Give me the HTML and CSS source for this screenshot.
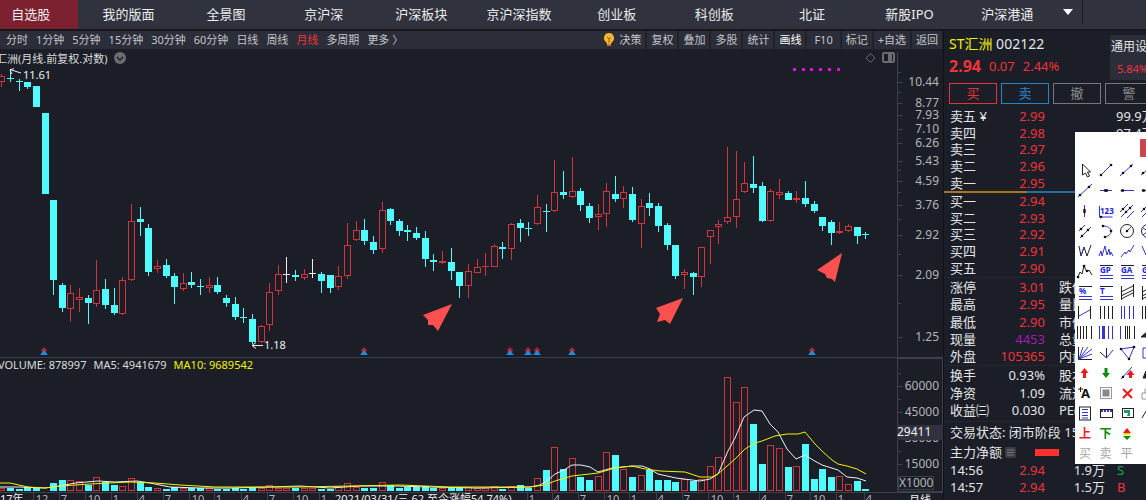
FILE: index.html
```html
<!DOCTYPE html>
<html lang="zh-CN">
<head>
    <meta charset="UTF-8">
    <title>ST汇洲 002122</title>
    <meta name="viewport" content="width=device-width">
    <link rel="stylesheet" href="styles.css">
</head>
<body>
<!--板块导航-->
<nav class="top-nav">
    <div class="tabs">
        <a href="#zixuan" class="on">自选股</a>
        <a href="#mine">我的版面</a>
        <a href="#all">全景图</a>
        <a href="#jhs">京沪深</a>
        <a href="#block">沪深板块</a>
        <a href="#index">京沪深指数</a>
        <a href="#cyb">创业板</a>
        <a href="#kcb">科创板</a>
        <a href="#bz">北证</a>
        <a href="#ipo">新股IPO</a>
        <a href="#hsgt">沪深港通</a>
    </div>
    <button class="more" aria-label="更多板块"><svg width="10" height="6" viewBox="0 0 10 6"><path d="M0 0h10L5 6z" fill="#fff"/></svg></button>
</nav>

<main class="main">
    <section class="left">
        <div class="toolbar">
            <div class="periods">
                <button>分时</button>
                <button>1分钟</button>
                <button>5分钟</button>
                <button>15分钟</button>
                <button>30分钟</button>
                <button>60分钟</button>
                <button>日线</button>
                <button>周线</button>
                <button class="on">月线</button>
                <button>多周期</button>
                <button>更多 〉</button>
            </div>
            <div class="tools">
                <button class="idea">
                    <svg width="12" height="14" viewBox="0 0 12 14">
                        <path d="M6 0a5 5 0 0 1 3 9l-1 2H4L3 9a5 5 0 0 1 3-9z" fill="#f5b82e"/>
                        <path d="M4 4l2 2 2-2M6 6v4" fill="none" stroke="#9a5a10"/>
                        <path d="M4 11h4v2H4z" fill="#b97a1c"/>
                    </svg>决策</button>
                <button>复权</button>
                <button>叠加</button>
                <button>多股</button>
                <button>统计</button>
                <button class="lit">画线</button>
                <button class="f10">F10</button>
                <button>标记</button>
                <button>+自选</button>
                <button>返回</button>
            </div>
        </div>

        <!--K线-->
        <div class="pane price-pane">
            <div class="plot">
                <div class="plot-head">
                    <span class="name">汇洲(月线.前复权.对数)</span>
                    <svg class="badge" width="12" height="12" viewBox="0 0 12 12"><circle cx="6" cy="6" r="6" fill="#6b6b70"/><path d="M3 5l3 3 3-3" fill="none" stroke="#1b1e26" stroke-width="1.4"/></svg>
                    <svg class="corner" width="30" height="12" viewBox="0 0 30 12" fill="none" stroke="#6b6b70">
                        <path d="M5.500 1.500l4.500 4.500-4.500 4.500L1 6z"/>
                        <rect x="18" y="1" width="11" height="9" rx="1" stroke-width="2"/>
                        <path d="M25 2v8" stroke-width="4"/>
                    </svg>
                </div>
                <svg id="kline" class="kline" viewBox="0 66 897 291" preserveAspectRatio="xMaxYMin meet"></svg>
            </div>
            <svg id="priceAxis" class="axis" viewBox="897 49 46 308"></svg>
        </div>

        <!--成交量-->
        <div class="pane vol-pane">
            <div class="plot">
                <div class="vol-head">
                    <span>VOLUME: 878997</span>
                    <span>MA5: 4941679</span>
                    <span class="ma10">MA10: 9689542</span>
                </div>
                <svg id="volume" class="volume" viewBox="0 372 897 120" preserveAspectRatio="xMaxYMin meet"></svg>
            </div>
            <svg id="volAxis" class="axis" viewBox="897 358 46 134"></svg>
        </div>
        <svg id="dates" class="dates" viewBox="0 492 943 20" preserveAspectRatio="xMaxYMin meet"></svg>
    </section>

    <aside class="quote">
        <header class="quote-head">
            <div>
                <h1><b>ST汇洲</b> 002122</h1>
                <p class="now"><strong>2.94</strong><span>0.07</span><span>2.44%</span></p>
            </div>
            <a href="#industry" class="industry"><span>通用设备</span><em>5.84%</em></a>
        </header>
        <div class="orders">
            <button class="buy">买</button>
            <button class="sell">卖</button>
            <button>撤</button>
            <button>警</button>
        </div>
        <table class="book">
            <tr><th>卖五 ¥</th><td>2.99</td><td class="vol">99.9万</td></tr>
            <tr><th>卖四</th><td>2.98</td><td class="vol">97.4万</td></tr>
            <tr><th>卖三</th><td>2.97</td><td class="vol"></td></tr>
            <tr><th>卖二</th><td>2.96</td><td class="vol"></td></tr>
            <tr><th>卖一</th><td>2.95</td><td class="vol"></td></tr>
        </table>
        <div class="ratio"><i></i></div>
        <table class="book">
            <tr><th>买一</th><td>2.94</td><td class="vol"></td></tr>
            <tr><th>买二</th><td>2.93</td><td class="vol"></td></tr>
            <tr><th>买三</th><td>2.92</td><td class="vol"></td></tr>
            <tr><th>买四</th><td>2.91</td><td class="vol"></td></tr>
            <tr><th>买五</th><td>2.90</td><td class="vol"></td></tr>
        </table>
        <table class="facts five">
            <tr><th>涨停</th><td>3.01</td><th class="second">跌停</th></tr>
            <tr><th>最高</th><td>2.95</td><th class="second">量比</th></tr>
            <tr><th>最低</th><td>2.90</td><th class="second">市值</th></tr>
            <tr><th>现量</th><td class="purple">4453</td><th class="second">总量</th></tr>
            <tr><th>外盘</th><td>105365</td><th class="second">内盘</th></tr>
        </table>
        <table class="facts three">
            <tr><th>换手</th><td class="plain">0.93%</td><th class="second">股本</th></tr>
            <tr><th>净资</th><td class="plain">1.09</td><th class="second">流通</th></tr>
            <tr><th>收益㈢</th><td class="plain">0.030</td><th class="second">PE(动)</th></tr>
        </table>
        <p class="status">交易状态: 闭市阶段 15:00</p>
        <p class="flow">主力净额
            <svg width="11" height="11" viewBox="0 0 11 11"><rect width="11" height="11" rx="2" fill="#3a3c42"/><path d="M2 3h7M2 5.500h7M2 8h7" stroke="#77797e"/></svg>
            <i></i>
        </p>
        <table class="ticks">
            <tr><th>14:56</th><td>2.94</td><td class="hand">1.9万</td><td class="s">S</td></tr>
            <tr><th>14:57</th><td>2.94</td><td class="hand">1.5万</td><td class="b">B</td></tr>
        </table>
    </aside>
</main>

<!--画线工具浮窗-->
<div class="palette">
    <button class="close" aria-label="关闭"></button>
    <div id="drawTools" class="draw-tools"></div>
</div>
<script src="chart.js"></script>
</body>
</html>
```

FILE: styles.css
```css
html, body{
    height: 100%;
    margin: 0;
    padding: 0;
}

body{
    position: relative;
    overflow: hidden;
    background: #1b1e26;
    color: #dcdcde;
    font-family: "Noto Sans", "Noto Sans CJK SC", sans-serif;
    font-size: 13px;
}

a{
    color: inherit;
    text-decoration: none;
}

button{
    margin: 0;
    padding: 0;
    border: 0;
    background: none;
    color: inherit;
    font: inherit;
}

h1, p{
    margin: 0;
    font-weight: normal;
}

svg{
    display: block;
}

svg text{
    font-family: "Noto Sans", "Noto Sans CJK SC", sans-serif;
    font-size: 11px;
}

/* 顶部导航 */
.top-nav{
    display: flex;
    height: 29px;
    padding-right: 63px;
    background: #30333d;
    border-bottom: 2px solid #15171d;
}

.tabs{
    flex: 1;
    display: grid;
    grid-template-columns: repeat(11, 1fr);
    gap: 4px;
    margin-left: -16px;
    line-height: 28px;
    text-align: center;
    color: #ececee;
}

.tabs a{
    white-space: nowrap;
}

.tabs .on{
    background: #7d2130;
}

.more{
    display: flex;
    align-items: center;
    justify-content: center;
    width: 29px;
    height: 24px;
    border-right: 1px solid #15171d;
}

.main{
    display: grid;
    grid-template-columns: minmax(0, 1fr) 203px;
}

/* 周期和工具 */
.toolbar{
    display: flex;
    justify-content: space-between;
    height: 18px;
    margin-right: 1px;
    background: #2b2d38;
    color: #c4c4c8;
    font-size: 11px;
    line-height: 18px;
    white-space: nowrap;
}

.periods{
    display: flex;
    gap: 8px;
    padding-left: 6px;
}

.periods .on{
    color: #f0333b;
}

.tools{
    display: flex;
    gap: 2px;
    background: #20222b;
}

.tools button{
    padding: 0 4px;
    background: #2b2d38;
}

.tools .idea{
    display: flex;
    align-items: center;
    gap: 4px;
}

.tools .lit{
    color: #fff;
}

.tools .f10{
    padding: 0 7px;
}

/* 图表 */
.pane{
    display: grid;
    grid-template-columns: minmax(0, 1fr) 46px;
}

.price-pane{
    border-bottom: 1px solid #3c4049;
}

.plot-head{
    display: flex;
    align-items: center;
    height: 17px;
    font-size: 11px;
    white-space: nowrap;
}

.plot-head .name{
    margin-left: -4px;
}

.plot-head .badge{
    margin-left: 6px;
}

.plot-head .corner{
    margin-left: auto;
    margin-right: 2px;
}

.kline, .volume, .dates{
    width: 100%;
    overflow: visible;
}

.kline{
    height: 291px;
}

.vol-head{
    display: flex;
    gap: 7px;
    height: 14px;
    margin-left: -2px;
    font-size: 11px;
    line-height: 14px;
    white-space: nowrap;
}

.ma10{
    color: #f2f200;
}

.volume{
    height: 120px;
}

.dates{
    height: 20px;
}

.axis{
    width: 46px;
}

.up{
    fill: #1b1e26;
    stroke: #d2343c;
}

.down{
    fill: #4ffcff;
    stroke: #4ffcff;
}

.flat{
    fill: #eee;
    stroke: #eee;
}

.grid-line{
    fill: none;
    stroke: #3c4049;
}

.label{
    fill: #b4b5b9;
}

.light{
    fill: #f0f0f0;
}

#priceAxis .label, #volAxis text{
    font-size: 12px;
}

/* 行情 */
.quote{
    border-left: 1px solid #101218;
    box-sizing: border-box;
    overflow: hidden;
    color: #e4e4e6;
}

.quote-head{
    display: flex;
    justify-content: space-between;
    height: 52px;
    padding: 4px 0 0 5px;
    box-sizing: border-box;
    white-space: nowrap;
}

.quote-head h1{
    font-size: 14px;
    line-height: 18px;
}

.quote-head b{
    color: #f2f200;
    font-weight: normal;
}

.now{
    display: flex;
    align-items: center;
    gap: 8px;
    height: 26px;
    color: #f0333b;
}

.now strong{
    font-size: 16px;
}

.industry{
    width: 36px;
    height: 45px;
    background: #2b2d38;
    overflow: hidden;
}

.industry span{
    display: block;
    padding-left: 1px;
    font-size: 12px;
    line-height: 24px;
}

.industry em{
    display: block;
    padding-left: 7px;
    color: #f0333b;
    font-size: 11px;
    font-style: normal;
    line-height: 20px;
}

.orders{
    display: flex;
    gap: 4px;
    padding-left: 5px;
}

.orders button{
    flex: none;
    width: 48px;
    height: 21px;
    border: 1px solid #75777c;
    color: #8b8d92;
    line-height: 19px;
}

.orders .buy{
    border-color: #e0333b;
    color: #e0333b;
}

.orders .sell{
    border-color: #2a83c8;
    color: #2a83c8;
}

table{
    width: 100%;
    border-collapse: collapse;
    table-layout: fixed;
}

th, td{
    padding: 0;
    font-weight: normal;
    line-height: 16px;
    text-align: left;
    white-space: nowrap;
}

.book, .facts, .ticks{
    color: #f0333b;
}

.quote th{
    width: 48px;
    padding-left: 6px;
    color: #e4e4e6;
    box-sizing: border-box;
}

.book td, .facts td, .ticks td{
    width: 53px;
    text-align: right;
}

.book{
    height: 83px;
    margin-top: 4px;
}

.ratio + .book{
    margin-top: 0;
}

.book .vol{
    width: auto;
    padding-left: 71px;
    color: #e4e4e6;
    text-align: left;
}

.ratio{
    height: 2px;
    background: #1f6ea8;
}

.ratio i{
    display: block;
    width: 41%;
    height: 2px;
    background: #a9761a;
}

.facts{
    border-top: 1px solid #24272f;
}

.quote .second{
    width: auto;
    padding-left: 14px;
}

.five{
    height: 88px;
    margin-top: 1px;
}

.three{
    height: 54px;
}

.facts .purple{
    color: #a21caf;
}

.facts .plain{
    color: #e4e4e6;
}

.status, .flow{
    padding-left: 6px;
    line-height: 20px;
    white-space: nowrap;
}

.status{
    margin-top: 2px;
    border-top: 1px solid #24272f;
}

.flow{
    display: flex;
    align-items: center;
    gap: 3px;
    height: 20px;
}

.flow i{
    width: 24px;
    height: 7px;
    margin-left: 16px;
    background: #ff3030;
}

.ticks{
    height: 33px;
}

.ticks .hand{
    width: 60px;
    color: #e4e4e6;
}

.ticks .s, .ticks .b{
    width: auto;
    padding-left: 12px;
    text-align: left;
}

.ticks .s{
    color: #18a850;
}

/* 画线浮窗 */
.palette{
    position: absolute;
    top: 132px;
    right: -13px;
    width: 84px;
    height: 332px;
    background: #fff;
    overflow: hidden;
}

.close{
    display: block;
    width: 19px;
    height: 18px;
    margin: 7px 0 3px 65px;
    background: #c9484f;
}

.draw-tools{
    display: grid;
    grid-template-columns: 20px 21px 21px 21px;
    grid-template-rows: repeat(15, 1fr);
    height: 304px;
}

.draw-tools button{
    display: flex;
    align-items: center;
    justify-content: center;
    color: #a4a4a4;
    font-size: 12px;
    line-height: 16px;
}

.draw-tools svg{
    overflow: visible;
    fill: none;
    stroke: #3434d4;
}

.draw-tools svg text{
    fill: #2222dd;
    stroke: none;
    font-size: 8px;
    font-weight: bold;
}

.draw-tools svg .letter{
    fill: #111;
    font-size: 13px;
}

.draw-tools .k{
    stroke: #222;
}

.draw-tools .dot{
    fill: #111;
    stroke: none;
}

.draw-tools .red, .draw-tools .green{
    font-weight: bold;
}

.draw-tools .red{
    color: #f01818;
}

.draw-tools .green{
    color: #0a8a0a;
}
```

FILE: chart.js
```js
// 每根K线: 类型(r涨 c跌 w平), 最高, 实体上, 实体下, 最低, 成交量柱顶
var bars = [
    ['r',74,76,82,87,488], ['c',70,78,79,82,488], ['c',79,81,82,91,489], ['c',82,82,87,89,487],
    ['c',86,86,107,107,488], ['c',113,113,194,194,491], ['c',200,200,280,295,483], ['c',283,285,308,312,480],
    ['r',285,293,309,322,480], ['r',288,297,300,312,481], ['c',295,298,303,324,485], ['r',260,290,304,307,477],
    ['c',279,289,305,309,482], ['c',288,305,313,315,485], ['r',277,280,314,315,486], ['r',204,221,280,281,478],
    ['c',207,219,222,236,482], ['c',224,228,272,276,487], ['r',260,266,269,273,488], ['c',259,265,276,278,489],
    ['c',273,276,287,304,487], ['r',273,283,289,291,488], ['c',272,282,285,288,488], ['c',279,286,287,295,488],
    ['r',277,285,288,293,488], ['c',277,285,292,294,489], ['c',295,298,303,307,489], ['c',297,304,317,320,488],
    ['c',308,317,318,323,489], ['c',314,319,342,344,488], ['r',325,326,342,343,488], ['r',283,292,325,331,485],
    ['r',265,274,291,295,488], ['w',257,274,275,283,488], ['c',270,275,277,281,488], ['r',269,274,278,280,488],
    ['w',259,273,274,278,488], ['c',272,274,281,293,489], ['c',275,275,288,293,489], ['r',266,276,287,290,486],
    ['r',223,245,276,279,483], ['r',221,230,240,241,487], ['c',219,230,241,245,488], ['c',236,242,250,254,488],
    ['r',202,210,249,253,482], ['c',208,209,221,225,485], ['c',219,221,231,236,488], ['c',225,230,232,241,487],
    ['c',227,233,238,240,487], ['c',231,238,259,267,486], ['c',254,260,262,271,488], ['r',251,261,263,264,488],
    ['c',248,262,271,280,488], ['c',272,272,286,298,487], ['r',264,271,286,298,487], ['r',259,267,273,273,488],
    ['r',253,266,267,276,488], ['r',244,246,267,267,486], ['c',242,247,249,259,489], ['r',223,224,249,260,486],
    ['c',219,223,228,242,485], ['c',222,228,229,236,488], ['r',195,207,224,225,478], ['c',204,211,212,232,470],
    ['r',160,192,211,212,447], ['c',171,192,195,199,469], ['r',157,191,197,198,458], ['c',188,191,205,211,477],
    ['c',203,206,218,223,480], ['r',204,214,217,230,476], ['r',183,191,214,227,452], ['c',176,194,199,202,455],
    ['r',186,192,199,208,469], ['c',187,194,220,222,477], ['r',199,206,224,248,475], ['c',193,203,208,216,470],
    ['c',203,206,226,232,480], ['c',223,225,245,250,480], ['c',245,245,276,279,482], ['r',269,272,275,289,479],
    ['c',272,273,277,295,481], ['r',247,247,277,287,479], ['r',230,230,237,264,466], ['r',220,224,227,244,457],
    ['r',147,217,222,224,377], ['r',151,199,217,228,402], ['r',162,183,192,193,387], ['c',156,184,188,193,424],
    ['c',182,186,221,222,464], ['r',189,191,221,222,445], ['r',179,192,195,199,448], ['c',191,193,200,200,467],
    ['r',191,198,200,203,466], ['c',181,198,204,207,444], ['c',201,204,211,213,479], ['c',217,217,226,231,469],
    ['c',220,222,233,245,477], ['r',222,231,233,234,476], ['r',224,226,231,232,484], ['c',227,227,236,244,481],
    ['c',232,234,235,239,489]
];
var cls = {r: 'up', c: 'down', w: 'flat'};

function $(id){
    return document.getElementById(id);
}

function barX(i){
    return Math.round(10 + (i - 1) * 8.64) + 0.5;
}

function rect(c, x, y, w, h){
    return '<rect class="' + c + '" x="' + x + '" y="' + y + '" width="' + w + '" height="' + h + '"/>';
}

function line(c, x1, y1, x2, y2){
    return '<path class="' + c + '" d="M' + x1 + ' ' + y1 + 'L' + x2 + ' ' + y2 + '"/>';
}

function text(c, x, y, s, anchor){
    return '<text class="' + c + '" x="' + x + '" y="' + y + '" text-anchor="' + (anchor || 'start') + '">' + s + '</text>';
}

// K线
var k = '', v = '';
bars.forEach(function(b, i){
    var x = barX(i), c = cls[b[0]];
    k += line(c, x, b[1], x, b[4]);
    if (b[3] - b[2] < 2){
        k += line(c, x - 3.5, b[2] + 0.5, x + 3.5, b[2] + 0.5);
    }else{
        k += rect(c, x - 3, b[2] + 0.5, 6, b[3] - b[2] - 1);
    }
    if (b[5] < 491){
        v += rect(c === 'flat' ? 'up' : c, x - 3, b[5] + 0.5, 6, 490 - b[5]);
    }
});

// 除权标记
[44, 364, 510, 528, 537, 572, 812].forEach(function(x){
    k += '<path fill="#b3202b" d="M' + x + ' 347l3 3-1 2h-4l-1-2z"/>';
    k += '<path fill="#1f8ae0" d="M' + x + ' 350l4 5h-8z"/>';
});
for (var i = 0; i < 6; i++){
    k += '<rect fill="#e010e0" x="' + (793 + Math.round(i * 8.7)) + '" y="68" width="3" height="3"/>';
}

// 手绘箭头
['452,304 423,315 428,320 428,325 433,325 438,331',
 '683,298 656,308 660,314 657,322 665,320 670,324',
 '842,253 817,270 825,274 827,278 832,279 835,282'].forEach(function(p){
    k += '<polygon fill="#ff5050" points="' + p + '"/>';
});

k += '<path fill="none" stroke="#eee" d="M21 73L10 69.500m4-1l-4 1.500 2 4M263 345.500h-11m4-3l-4 3 4 3"/>';
k += text('light', 23, 79, '11.61') + text('light', 264, 349, '1.18');
$('kline').innerHTML = k;

// 均线
v += '<polyline fill="none" stroke="#f0f0f0" points="0,487 20,487 45,488 60,486 75,483 98,481 115,482 137,481 150,483 170,487 200,488 230,488 270,487 300,486 330,488 360,486 395,486 430,487 476,488 530,487 540,485 547,481 555,474 564,470 572,465 581,465 590,467 598,472 612,468 633,466 642,466 650,469 658,474 676,478 700,481 710,479 718,474 728,451 735,438 744,417 754,410 762,411 770,424 778,432 787,449 796,459 805,455 813,460 822,465 838,470 847,477 857,478 866,481"/>';
v += '<polyline fill="none" stroke="#f2f200" points="0,483 10,483 28,487 45,488 60,486 90,484 130,482 155,483 180,485 215,487 300,487 400,485 450,487 530,487 545,485 555,481 572,476 598,473 615,468 632,466 645,469 660,471 685,472 700,477 712,477 718,474 735,459 745,449 755,443 762,441 775,436 787,434 798,434 805,432 815,444 822,451 832,460 838,464 847,466 857,469 866,474"/>';
$('volume').innerHTML = v;

// 价格轴(对数)
var a = line('grid-line', 897.5, 52, 897.5, 357);
[['10.44',82],['8.77',103],['7.93',115],['7.10',129],['6.26',143],['5.43',161],['4.59',181],
 ['3.76',205],['2.92',235],['2.09',275],['1.25',337]].forEach(function(p){
    a += line('grid-line', 898, p[1] + 0.5, 903, p[1] + 0.5);
    a += text('label', 939, p[1] + 4, p[0], 'end');
});
[72, 92, 170, 192, 219, 254, 303].forEach(function(y){
    a += line('grid-line', 898, y + 0.5, 901, y + 0.5);
});
$('priceAxis').innerHTML = a;

// 成交量轴
a = rect('grid-line', 897.5, 358.5, 45, 133);
[['60000',386],['45000',412],['30000',438],['15000',464]].forEach(function(p){
    a += line('grid-line', 898, p[1] + 0.5, 903, p[1] + 0.5);
    a += line('grid-line', 898, p[1] - 12.5, 901, p[1] - 12.5);
    a += text('label', 939, p[1] + 4, p[0], 'end');
});
a += '<rect x="897" y="425" width="46" height="15" fill="#30323f"/>' + text('light', 897, 436, '29411');
a += rect('grid-line', 898.5, 476.5, 35, 13) + text('label', 899, 487, 'X1000');
$('volAxis').innerHTML = a;

// 日期轴
var d = line('grid-line', 0, 492.5, 943, 492.5);
d += text('light', 0, 503, '17年');
[[42,12],[64,7],[94,10],[116,1],[142,4],[168,7],[198,10],[219,1],[246,4],[272,7],[302,10],[324,1],
 [532,1],[557,4],[583,7],[613,10],[634,1],[661,4],[687,7],[717,10],[738,1],[764,4],[790,7],[819,10],[841,1],[869,4]].forEach(function(p){
    var w = p[1] > 9 ? 9 : 5;
    d += line('grid-line', p[0] - w + 0.5, 493, p[0] - w + 0.5, 500);
    d += text('label', p[0], 503, p[1], 'middle');
});
d += text('light', 335, 503, '2021/03/31/三 62 至今涨幅54.74%)');
d += text('light', 909, 504, '月线');
$('dates').innerHTML = d;

// 画线工具, 每行四个
function dots(list){
    return list.map(function(p){
        return '<circle class="dot" cx="' + p[0] + '" cy="' + p[1] + '" r="1.3"/>';
    }).join('');
}
function bands(s){
    return '<path class="k" d="M2 2.500h13"/><path d="M2 12.500h13M2 15.500h13"/><text x="2" y="10">' + s + '</text>';
}
var tools = [
    '<path class="k" fill="#fff" d="M5.500 2v11l3-2 2 4 2-1-2-4h3z"/>',
    '<path d="M3 13L13 3"/>' + dots([[3,13],[13,3]]),
    '<path d="M1 14L14 2"/>' + dots([[4,11],[12,4]]),
    '<path d="M1 13L13 3"/>' + dots([[3,11]]),

    '<path d="M1 15L15 2"/>' + dots([[3,13],[12,5]]),
    '<path d="M2 8.500h12"/>' + dots([[8,8.5],[7,8.5],[9,8.5]]),
    '<path d="M3 8.500h12"/>' + dots([[3,8.5],[4,8.5]]),
    '<path d="M3 8.500h12"/>' + dots([[3,8.5],[4,8.5]]),

    '<path d="M7.500 2v12"/>' + dots([[7.5,7],[7.5,9]]),
    '<path d="M1.500 3v11h13"/><text x="2" y="11">123</text>' + dots([[3,14]]),
    '<path d="M1 9l8-8M2 14L14 2M8 15l7-7"/>' + dots([[4,6],[7,9],[11,5]]),
    '<path d="M1 9l8-8M2 14L14 2"/>' + dots([[4,6]]),

    '<path d="M2 8l6-6M3 15L14 4"/>' + dots([[4,6],[5,13],[11,7]]),
    '<path d="M5 3c10 0 11 9 2 11"/>' + dots([[5,3],[13,8],[7,14]]),
    '<circle class="k" cx="8" cy="8" r="6.500"/><path d="M8 8l4-4"/>' + dots([[8,8]]),
    '<circle class="k" cx="8" cy="8" r="6.500"/><path d="M8 8L3 5M8 8L3 12"/>',

    '<path class="k" d="M2 3l2 10 3-9 3 9 4-11"/><path d="M4 13l3-9"/>',
    '<path d="M1 13l2-5 1 5 3-10 2 9 2-6 1 6 1-3 2 4"/>',
    '<path d="M2 14l4-5 1 2 3-4 1 2 4-7"/>',
    '<path d="M2 3l4 9 5-8"/>',

    '<path class="k" d="M1 14l2-5 2 2 2-8 3 6 2-2 3 5"/>' + dots([[1,14],[7,3],[10,8]]),
    bands('GP'), bands('GA'), bands('GL'),

    bands('%'), bands('T'),
    '<path class="k" d="M2.500 2v14M14.500 0v13"/><path class="k" d="M2 8l12-6M2 12l12-6M2 15l12-6"/>',
    '<path class="k" d="M2.500 2v14M2 8l12-6M2 12l12-6M2 15l12-6"/>',

    '<path class="k" d="M1.500 2v13M13.500 2v13"/><path d="M2 12l11-6"/>',
    '<path class="k" d="M2.500 2v13M6.500 2v13M10.500 2v13M14.500 2v13"/>',
    '<path d="M2.500 2v13M5.500 2v13M10.500 2v13M14.500 2v13"/>',
    '<path class="k" d="M2.500 2v13M5.500 2v13"/>',

    '<path class="k" d="M.500 2v13M3.500 2v13M6.500 2v13M9.500 2v13M14.500 2v13"/>',
    '<path d="M1.500 2v13M4.500 2v13M10.500 2v13M14.500 2v13"/><path stroke-width="3" d="M5.500 2v13"/>',
    '<path d="M1.500 2v13"/><path class="k" d="M6.500 2v13M8.500 2v13M10.500 2v13M15.500 2v13"/>',
    '<path class="k" fill="#222" d="M1 13l7-6v6z"/>',

    '<path class="k" d="M1.500 2v12.500H15"/><path d="M2 14L6 2M2 14L11 2M2 14L15 4M2 14l13-5"/>',
    '<path class="k" d="M8.500 3v10L2 7"/><path d="M8.500 13L15 5"/>',
    '<path d="M2 4l13-2-5 12z"/>' + dots([[2,4],[15,2],[10,14]]),
    '<path d="M3 3h10v10H3z"/>',

    '<path fill="#f01818" stroke="none" d="M7.500 3l4 5H9v5H6V8H3.500z"/>',
    '<path fill="#0a8a0a" stroke="none" d="M8 13L4 8h2.500V3h3v5H12z"/>',
    '<path d="M2 14L13 2"/><path fill="#f01818" stroke="none" d="M11.500 5l4 5H13v3h-3v-3H7.500z"/>' + dots([[4,12]]),
    '<path class="k" fill="#222" d="M3 13l3-7 3 7z"/>',

    '<text class="letter" x="4" y="13">A</text><path class="k" d="M1 4h5M3.500 2v5"/>',
    '<rect x="2.500" y="2.500" width="11" height="11" stroke="#999"/><rect x="5" y="5" width="6" height="6" fill="#888" stroke="#888"/>',
    '<path stroke="#f01818" stroke-width="2" d="M4 4l9 9M13 4l-9 9"/>',
    '<path stroke="#999" d="M2 8h9v6H2zM5 8V4h5"/>',

    '<rect class="k" x="2.500" y="2" width="11" height="13"/><path d="M5 4.500h6M5 7.500h6M5 10.500h6M5 13h6"/>',
    '<rect class="k" x="2.500" y="4.500" width="12" height="8"/><path stroke-width="2" stroke-dasharray="2 1" d="M3 6h11"/>',
    '<rect class="k" x="3.500" y="3.500" width="11" height="9"/><path fill="#1f9a6a" stroke="none" d="M5 5h6v6H8l1-3H5z"/>',
    '<path class="k" d="M2 13L8 3"/>'
];
var html = tools.map(function(t){
    return '<button><svg width="16" height="16" viewBox="0 0 16 16">' + t + '</svg></button>';
}).join('');
html += '<button class="red">上</button><button class="green">下</button>';
html += '<button><svg width="16" height="16" viewBox="0 0 16 16"><path fill="#f01818" stroke="none" d="M8 2l4 5H4z"/><path fill="#e8d800" stroke="none" d="M5 7h6v2H5z"/><path fill="#0a8a0a" stroke="none" d="M4 10h8l-4 4z"/></svg></button><button></button>';
html += '<button>买</button><button>卖</button><button>平</button><button></button>';
$('drawTools').innerHTML = html;
```
